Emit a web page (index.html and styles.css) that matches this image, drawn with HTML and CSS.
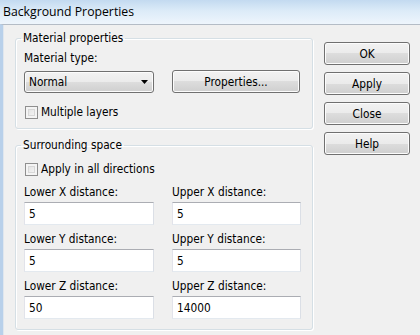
FILE: index.html
```html
<!DOCTYPE html>
<html lang="en">
<head>
  <meta charset="UTF-8">
  <title>Background Properties</title>
  <link rel="stylesheet" href="styles.css">
</head>
<body>
  <div class="window">
    <div class="titlebar">Background Properties</div>

    <div class="client">
      <div class="groups">
        <fieldset class="group group-material">
          <legend>Material properties</legend>
          <div class="field-label">Material type:</div>
          <div class="combo-row">
            <div class="combo">
              <span>Normal</span>
              <svg width="7" height="4" viewBox="0 0 7 4"><path d="M0 0h7L3.5 4z" fill="#000"/></svg>
            </div>
            <button class="btn btn-props">Properties...</button>
          </div>
          <label class="check">
            <input type="checkbox">
            <span>Multiple layers</span>
          </label>
        </fieldset>

        <fieldset class="group group-space">
          <legend>Surrounding space</legend>
          <label class="check">
            <input type="checkbox">
            <span>Apply in all directions</span>
          </label>
          <div class="dist-grid">
            <div class="dist">
              <div class="field-label">Lower X distance:</div>
              <input type="text" value="5">
            </div>
            <div class="dist">
              <div class="field-label">Upper X distance:</div>
              <input type="text" value="5">
            </div>
            <div class="dist">
              <div class="field-label">Lower Y distance:</div>
              <input type="text" value="5">
            </div>
            <div class="dist">
              <div class="field-label">Upper Y distance:</div>
              <input type="text" value="5">
            </div>
            <div class="dist">
              <div class="field-label">Lower Z distance:</div>
              <input type="text" value="50">
            </div>
            <div class="dist">
              <div class="field-label">Upper Z distance:</div>
              <input type="text" value="14000">
            </div>
          </div>
        </fieldset>
      </div>

      <div class="actions">
        <button class="btn">OK</button>
        <button class="btn">Apply</button>
        <button class="btn">Close</button>
        <button class="btn">Help</button>
      </div>
    </div>
  </div>
</body>
</html>
```

FILE: styles.css
```css
* {
  margin: 0;
  padding: 0;
  box-sizing: border-box;
}
body {
  background: #f0f0f0;
  color: #000;
  font-family: "DejaVu Sans Condensed", "DejaVu Sans", sans-serif;
  font-stretch: condensed;
  font-size: 11.75px;
  width: 420px;
  height: 335px;
  overflow: hidden;
}
.window {
  display: flex;
  flex-direction: column;
  height: 335px;
}
.titlebar {
  height: 24px;
  padding: 4px 0 0 3px;
  font-family: "Open Sans", sans-serif;
  font-stretch: normal;
  font-size: 12.25px;
  line-height: 16px;
  background: linear-gradient(#c3daf0, #dcebf8 45%, #eef5fc);
}
.client {
  flex: 1;
  display: flex;
  align-items: flex-start;
  gap: 11px;
  padding: 6px 0 0 12px;
  border-top: 1px solid #b4bcc6;
  border-left: 3px solid #b8d0ea;
  box-shadow: inset 1px 0 0 #dfe6ee;
}

/* group boxes */
.group {
  width: 298px;
  border: 1px solid #d5dfe5;
  border-radius: 3px;
  box-shadow: inset 1px 1px 0 #fff, 1px 1px 0 #fff;
  padding: 6px 8px 9px;
}
.group legend {
  margin-left: -3px;
  padding: 0 2px;
  line-height: 14px;
}
.group-space {
  margin-top: 9px;
  padding-top: 10px;
  padding-bottom: 10px;
}
.field-label {
  line-height: 14px;
}

/* combo + properties */
.combo-row {
  display: flex;
  align-items: flex-end;
  gap: 18px;
  margin-top: 5px;
}
.combo {
  width: 130px;
  height: 22px;
  display: flex;
  align-items: center;
  justify-content: space-between;
  padding: 0 5px 0 4px;
  border: 1px solid #707070;
  border-radius: 3px;
  background: linear-gradient(#f2f2f2 0%, #ebebeb 50%, #dddddd 50%, #cfcfcf 100%);
  box-shadow: inset 0 0 0 1px #fcfcfc;
}
.btn {
  font: inherit;
  color: #000;
  height: 23px;
  border: 1px solid #707070;
  border-radius: 3px;
  background: linear-gradient(#f2f2f2 0%, #ebebeb 50%, #dddddd 50%, #cfcfcf 100%);
  box-shadow: inset 0 0 0 1px #fcfcfc;
}
.btn-props {
  width: 128px;
}

/* checkboxes */
.check {
  display: flex;
  align-items: center;
  gap: 3px;
  height: 14px;
  margin-top: 12px;
  padding-left: 1px;
}
.group-space .check {
  margin-top: 0;
}
.check input {
  appearance: none;
  width: 13px;
  height: 13px;
  border: 1px solid #8f8f8f;
  background: linear-gradient(135deg, #dcdcdc, #fbfbfb);
  box-shadow: inset 0 0 0 2px #f4f4f4, inset 0 0 0 3px #d8d8d8;
}

/* distance fields */
.dist-grid {
  display: grid;
  grid-template-columns: 130px 129px;
  column-gap: 18px;
  row-gap: 7px;
  margin-top: 9px;
}
.dist {
  display: flex;
  flex-direction: column;
  gap: 3px;
}
.dist input {
  font: inherit;
  height: 23px;
  padding: 0 4px;
  color: #000;
  background: #fff;
  border: 1px solid;
  border-color: #abadb3 #dbdfe6 #e3e9ef #e2e3ea;
  outline: none;
}

/* right buttons */
.actions {
  display: flex;
  flex-direction: column;
  gap: 7px;
  margin-top: 11px;
}
.actions .btn {
  width: 86px;
}
```
